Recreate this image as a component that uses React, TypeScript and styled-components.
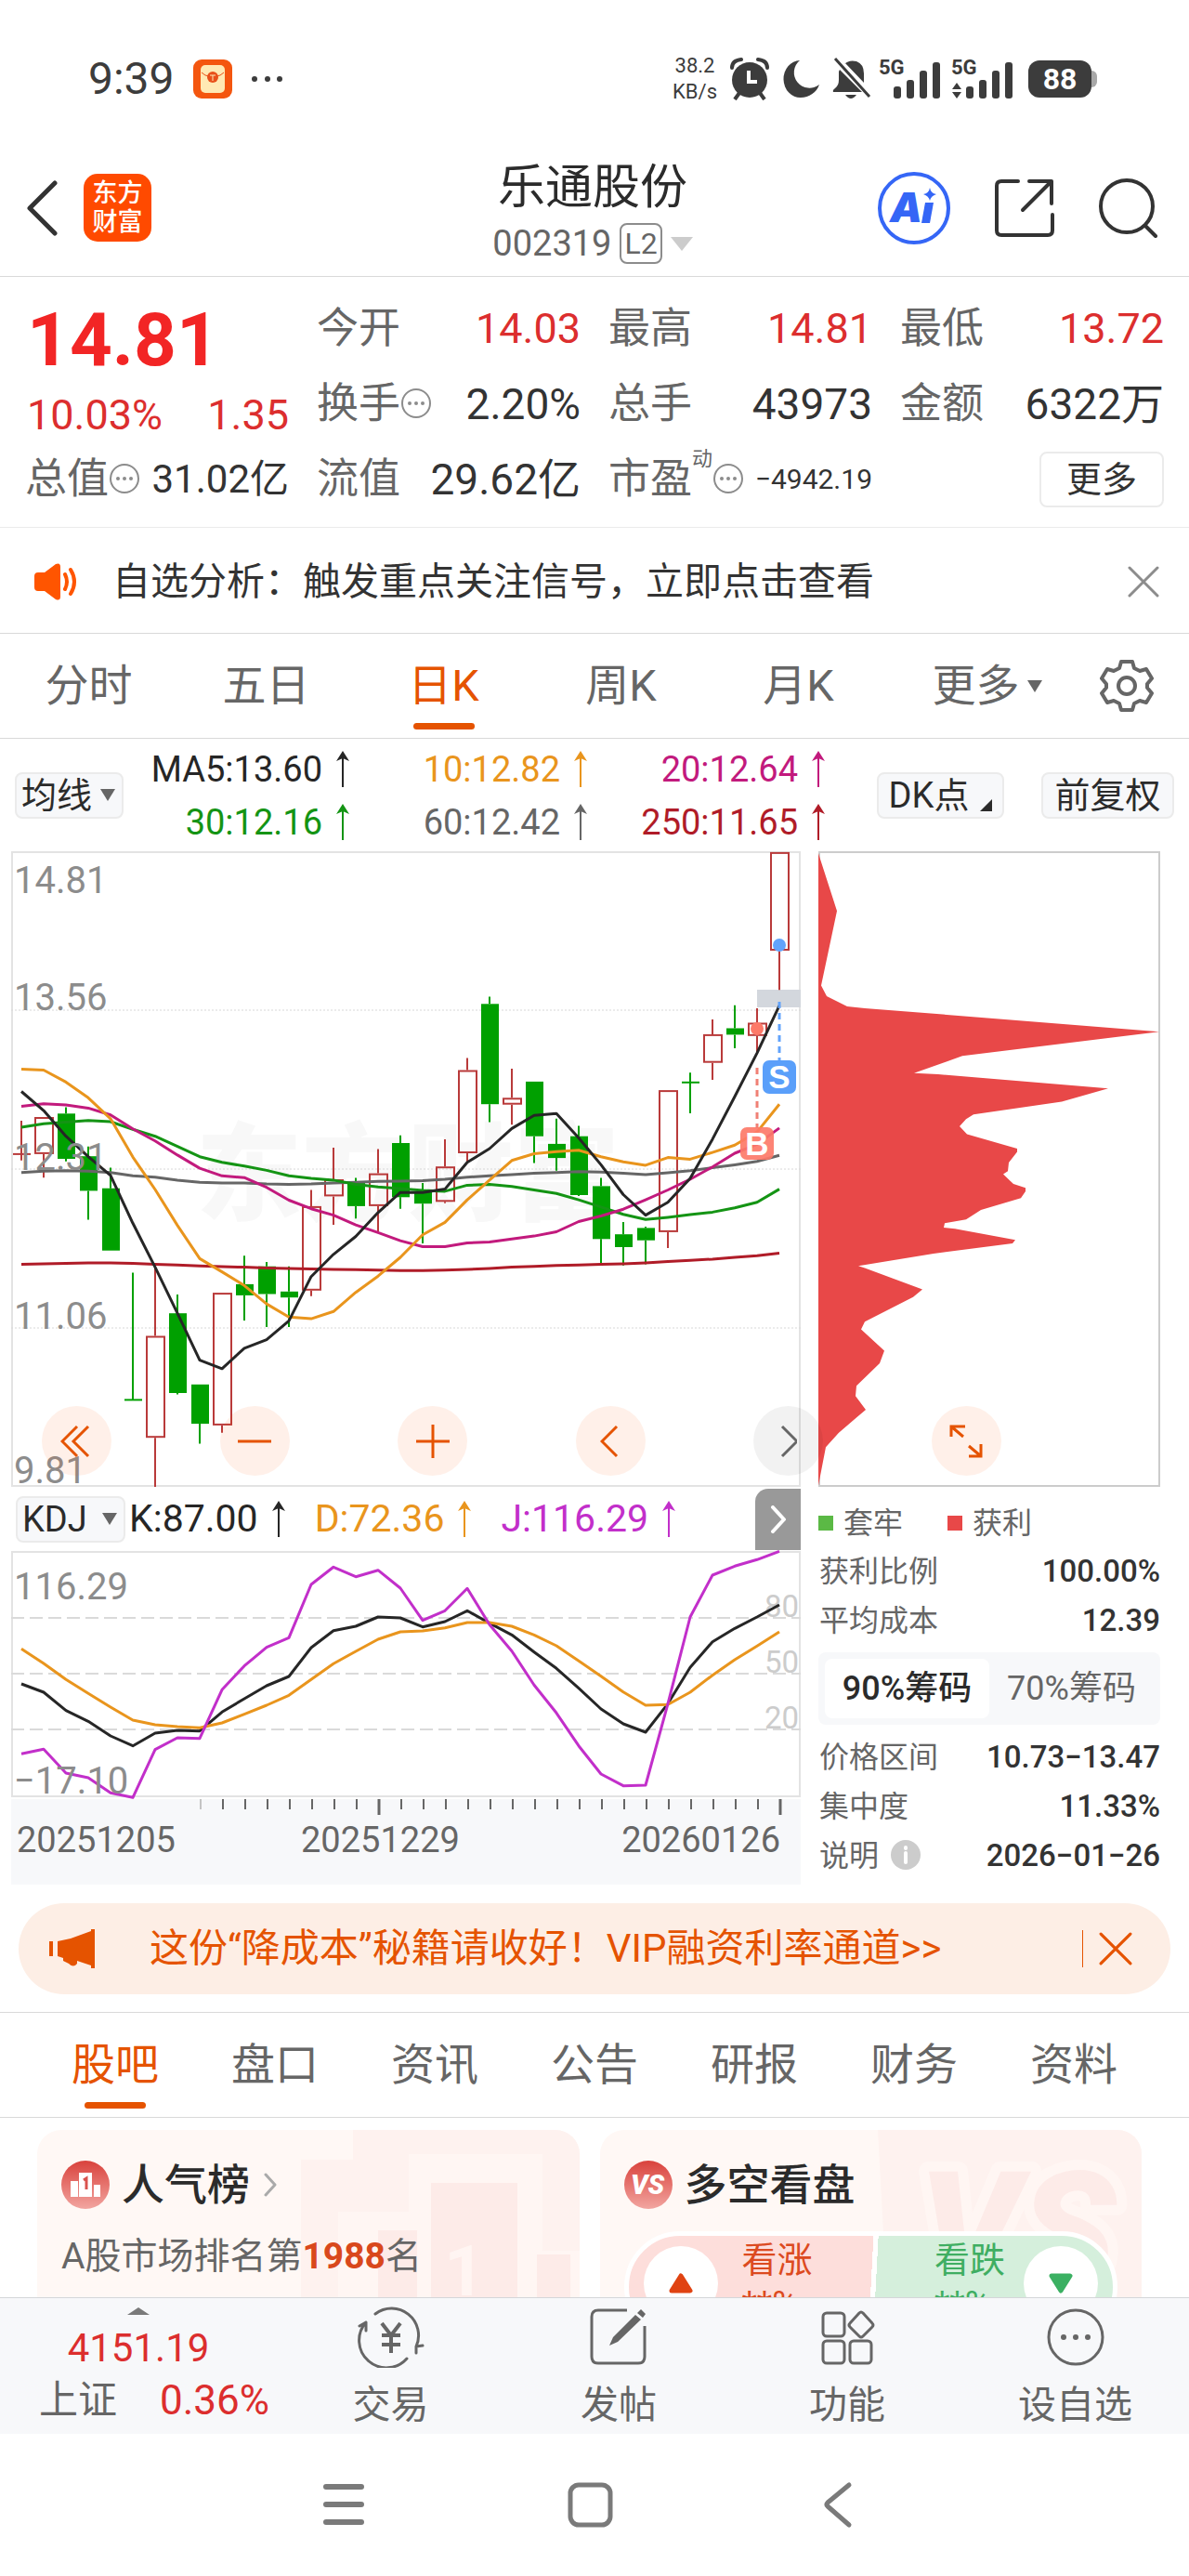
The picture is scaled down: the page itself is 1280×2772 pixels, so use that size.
import React from "react";
import styled, { createGlobalStyle, css } from "styled-components";

const color = {
  ink: "#2b2b2b",
  text: "#333333",
  sub: "#666666",
  faint: "#8c8c8c",
  red: "#dc2e2e",
  orange: "#e55300",
  line: "#d9d9d9",
  softLine: "#ebebeb",
  panel: "#f7f8fa",
  up: "#b93a3a",
  down: "#00a000",
};

const GlobalStyle = createGlobalStyle`
  *, *::before, *::after { box-sizing: border-box; }
  body {
    margin: 0;
    background: #fff;
    color: ${color.text};
    font-family: Roboto, "Noto Sans CJK SC", sans-serif;
  }
  button, select {
    margin: 0;
    padding: 0;
    border: 0;
    background: none;
    color: inherit;
    font: inherit;
  }
  svg { display: block; flex: none; }
  dl, dd, h1, h2, p { margin: 0; font-weight: 400; }
`;

const Shell = styled.div`
  display: flex;
  flex-direction: column;
  height: 100vh;
  background: #fff;
`;

/* ---------- status bar ---------- */

const StatusBar = styled.div`
  display: flex;
  justify-content: space-between;
  align-items: center;
  flex: none;
  height: 150px;
  padding: 20px 99px 0 95px;
  color: #3c3c3c;
`;

const StatusGroup = styled.div<{ $gap: number }>`
  display: flex;
  align-items: center;
  gap: ${(p) => p.$gap}px;
`;

const Clock = styled.time`
  font-size: 48px;
  line-height: 56px;
`;

const Speed = styled.span`
  font-size: 22px;
  line-height: 28px;
  text-align: center;
`;

const Battery = styled.span`
  display: flex;
  align-items: center;
  margin-left: 9px;
  &::after {
    content: "";
    width: 6px;
    height: 18px;
    border-radius: 0 6px 6px 0;
    background: #a8a8a8;
  }
`;

const BatteryLevel = styled.span`
  width: 68px;
  border-radius: 12px;
  background: #3c3c3c;
  color: #fff;
  font-size: 32px;
  font-weight: 700;
  line-height: 40px;
  text-align: center;
`;

/* ---------- header ---------- */

const Header = styled.header`
  display: grid;
  grid-template-columns: 1fr auto 1fr;
  align-items: center;
  flex: none;
  height: 148px;
  padding: 0 32px 0 28px;
  border-bottom: 1px solid ${color.line};
`;

const HeaderSide = styled.div<{ $end?: boolean }>`
  display: flex;
  align-items: center;
  gap: ${(p) => (p.$end ? 46 : 26)}px;
  justify-content: ${(p) => (p.$end ? "flex-end" : "flex-start")};
`;

const IconButton = styled.button`
  display: grid;
  place-items: center;
  flex: none;
`;

const BrandLogo = styled.a`
  display: grid;
  place-content: center;
  width: 73px;
  height: 73px;
  border-radius: 15px;
  background: #ff4a00;
  color: #fff;
  font-size: 27px;
  font-weight: 500;
  line-height: 31px;
  text-align: center;
  text-decoration: none;
`;

const TitleBlock = styled.div`
  padding-top: 9px;
  text-align: center;
`;

const StockName = styled.h1`
  color: ${color.ink};
  font-size: 51px;
  line-height: 60px;
`;

const StockCode = styled.button`
  display: flex;
  align-items: center;
  justify-content: center;
  gap: 9px;
  margin: 8px auto 0;
  color: ${color.sub};
  font-size: 38px;
  line-height: 44px;
`;

const LevelTag = styled.span`
  padding: 0 3px;
  border: 2px solid #8c8c8c;
  border-radius: 8px;
  font-size: 32px;
  line-height: 40px;
`;

/* ---------- quote ---------- */

const Main = styled.main`
  display: flex;
  flex-direction: column;
  flex: 1;
  min-height: 0;
  overflow-y: auto;
  scrollbar-width: none;
  > * { flex: none; }
`;

const Quote = styled.dl`
  display: grid;
  grid-template-columns: repeat(4, 1fr);
  grid-auto-rows: 81px;
  column-gap: 30px;
  padding: 15px 27px 11px;
  border-bottom: 1px solid ${color.softLine};
`;

const PriceCell = styled.div`
  grid-row: span 2;
  display: flex;
  flex-direction: column;
  padding-left: 2px;
  color: ${color.red};
`;

const Price = styled.strong`
  color: #f22525;
  font-size: 80px;
  font-weight: 700;
  line-height: 106px;
`;

const Change = styled.div`
  display: flex;
  justify-content: space-between;
  font-size: 45px;
  line-height: 56px;
`;

const QuoteCell = styled.div`
  display: flex;
  align-items: center;
  justify-content: space-between;
`;

const QuoteLabel = styled.dt`
  display: flex;
  align-items: center;
  color: ${color.sub};
  font-size: 45px;
  line-height: 52px;
  white-space: nowrap;
`;

const Superscript = styled.sup`
  align-self: flex-start;
  margin-top: -8px;
  font-size: 22px;
  line-height: 24px;
`;

const valueSize = { normal: 46, red: 45, fitted: 42, small: 30 };

const QuoteValue = styled.dd<{ $kind?: keyof typeof valueSize }>`
  color: ${(p) => (p.$kind === "red" ? color.red : color.text)};
  font-size: ${(p) => valueSize[p.$kind ?? "normal"]}px;
  line-height: 52px;
  white-space: nowrap;
`;

const MoreCell = styled.div`
  display: flex;
  align-items: center;
  justify-content: flex-end;
`;

const MoreButton = styled.button`
  width: 134px;
  border: 2px solid ${color.softLine};
  border-radius: 8px;
  font-size: 38px;
  line-height: 56px;
`;

/* ---------- notice ---------- */

const Notice = styled.div`
  display: flex;
  align-items: center;
  height: 114px;
  padding: 2px 32px 0 36px;
  border-bottom: 1px solid ${color.line};
`;

const NoticeText = styled.p`
  flex: 1;
  margin-left: 35px;
  font-size: 41px;
  line-height: 56px;
`;

/* ---------- period tabs ---------- */

const PeriodTabs = styled.nav`
  display: grid;
  grid-template-columns: repeat(6, 191fr) 134fr;
  height: 113px;
  border-bottom: 1px solid ${color.line};
`;

const TabButton = styled.button<{ $active?: boolean; $menu?: boolean }>`
  position: relative;
  display: flex;
  align-items: center;
  justify-content: center;
  gap: 8px;
  color: ${(p) => (p.$active ? color.orange : color.sub)};
  font-size: 47px;
  line-height: 60px;
  ${(p) =>
    p.$menu &&
    css`
      padding-left: 24px;
    `}
  ${(p) =>
    p.$active &&
    css`
      &::after {
        content: "";
        position: absolute;
        left: calc(50% - 33px);
        bottom: 9px;
        width: 66px;
        height: 7px;
        border-radius: 4px;
        background: ${color.orange};
      }
    `}
`;

/* ---------- moving averages ---------- */

const AverageBar = styled.div`
  display: flex;
  align-items: center;
  height: 121px;
  padding: 0 16px;
`;

const chip = css`
  border: 2px solid ${color.softLine};
  border-radius: 8px;
  background: ${color.panel};
  color: ${color.ink};
  font-size: 38px;
  line-height: 46px;
`;

const SelectBox = styled.label<{ $width: number }>`
  position: relative;
  flex: none;
  width: ${(p) => p.$width}px;
  select {
    ${chip}
    width: 100%;
    height: 50px;
    padding-left: 5px;
    appearance: none;
  }
  svg {
    position: absolute;
    top: 18px;
    right: 9px;
    pointer-events: none;
  }
`;

const ChipButton = styled.button<{ $wide?: boolean }>`
  ${chip}
  display: flex;
  align-items: flex-end;
  justify-content: center;
  gap: 12px;
  flex: none;
  width: ${(p) => (p.$wide ? 143 : 137)}px;
  svg { margin-bottom: 6px; }
`;

const AverageGrid = styled.div`
  display: grid;
  grid-template-columns: 244fr 256fr 256fr;
  flex: 1;
  margin-right: 55px;
  padding-top: 2px;
`;

const Reading = styled.span<{ $color: string; $size?: number }>`
  display: flex;
  align-items: center;
  justify-content: flex-end;
  gap: 14px;
  color: ${(p) => p.$color};
  font-size: ${(p) => p.$size ?? 38}px;
  line-height: 57px;
`;

const ChipGroup = styled.div`
  display: flex;
  gap: 40px;
`;

/* ---------- charts ---------- */

const ChartArea = styled.section`
  position: relative;
  display: grid;
  grid-template-columns: 850fr 368fr;
  column-gap: 19px;
  padding: 0 31px 0 12px;
`;

const ChartColumn = styled.div`
  min-width: 0;
`;

const Plot = styled.svg`
  width: 100%;
  height: auto;
  overflow: visible;
`;

const ChartControls = styled.div`
  position: absolute;
  top: 597px;
  left: 45px;
  right: 202px;
  display: flex;
  justify-content: space-between;
`;

const RoundButton = styled.button<{ $muted?: boolean }>`
  display: grid;
  place-items: center;
  width: 75px;
  height: 75px;
  border-radius: 50%;
  background: ${(p) => (p.$muted ? "rgba(0,0,0,0.05)" : "rgba(255,90,10,0.09)")};
  color: ${(p) => (p.$muted ? color.sub : color.orange)};
`;

const IndicatorBar = styled.div`
  display: flex;
  align-items: center;
  height: 69px;
  padding-left: 5px;
`;

const IndicatorValues = styled.div`
  display: flex;
  flex: 1;
  gap: 31px;
  margin-left: 4px;
`;

const NextIndicator = styled.button`
  display: grid;
  place-items: center;
  width: 49px;
  height: 66px;
  border-radius: 14px 0 0 0;
  background: #999;
  color: #fff;
`;

const TimeAxis = styled.div`
  height: 92px;
  margin-top: 2px;
  background: ${color.panel};
`;

const Dates = styled.div`
  display: grid;
  grid-template-columns: 306fr 190fr 326fr;
  padding: 0 22px 0 6px;
  color: ${color.sub};
  font-size: 38px;
  line-height: 52px;
  span:last-child { text-align: right; }
`;

/* ---------- cost panel ---------- */

const Legend = styled.div`
  display: grid;
  grid-template-columns: 139px 1fr;
  height: 64px;
  padding-top: 13px;
  color: ${color.sub};
  font-size: 32px;
  line-height: 44px;
`;

const LegendItem = styled.span<{ $swatch: string }>`
  display: flex;
  align-items: center;
  gap: 11px;
  &::before {
    content: "";
    width: 16px;
    height: 16px;
    background: ${(p) => p.$swatch};
  }
`;

const CostList = styled.dl`
  padding-left: 1px;
`;

const CostRow = styled.div`
  display: flex;
  align-items: center;
  justify-content: space-between;
  height: 53px;
  dt {
    display: flex;
    align-items: center;
    gap: 12px;
    color: ${color.sub};
    font-size: 32px;
    line-height: 44px;
  }
  dd {
    font-size: 33px;
    font-weight: 500;
    line-height: 44px;
  }
`;

const Segments = styled.div`
  display: grid;
  grid-template-columns: 177fr 177fr;
  margin: 8px 0;
  padding: 7px;
  border-radius: 8px;
  background: ${color.panel};
`;

const Segment = styled.button<{ $active?: boolean }>`
  border-radius: 8px;
  background: ${(p) => (p.$active ? "#fff" : "transparent")};
  color: ${(p) => (p.$active ? color.ink : color.sub)};
  font-size: 36px;
  font-weight: ${(p) => (p.$active ? 500 : 400)};
  line-height: 64px;
`;

/* ---------- promotion ---------- */

const Promo = styled.div`
  display: flex;
  align-items: center;
  margin: 20px 20px 19px;
  padding: 0 41px 0 32px;
  border-radius: 49px;
  background: #fdeee5;
  color: ${color.orange};
`;

const PromoLink = styled.a`
  flex: 1;
  margin-left: 57px;
  color: inherit;
  font-size: 42px;
  line-height: 98px;
  text-decoration: none;
`;

const PromoClose = styled(IconButton)`
  height: 40px;
  padding-left: 17px;
  border-left: 1px solid ${color.orange};
`;

/* ---------- content tabs and cards ---------- */

const ContentTabs = styled.nav`
  display: grid;
  grid-template-columns: repeat(7, 1fr);
  height: 114px;
  padding: 0 38px;
  border-top: 1px solid ${color.line};
  border-bottom: 1px solid ${color.line};
`;

const Cards = styled.div`
  display: grid;
  grid-template-columns: 1fr 1fr;
  gap: 22px;
  padding: 13px 51px 0 40px;
`;

const Card = styled.article`
  position: relative;
  height: 260px;
  padding: 26px 26px 0;
  border-radius: 26px;
  overflow: hidden;
  background: #fff8f5;
`;

const CardArt = styled.svg`
  position: absolute;
  top: 0;
  right: 0;
`;

const CardHead = styled.h2`
  position: relative;
  display: flex;
  align-items: center;
  gap: 13px;
  color: ${color.ink};
  font-size: 46px;
  font-weight: 500;
  line-height: 66px;
`;

const Rank = styled.p`
  position: relative;
  margin-top: 16px;
  color: ${color.sub};
  font-size: 39px;
  line-height: 56px;
  strong {
    color: #d9481c;
    font-weight: 700;
  }
`;

const Vote = styled.div`
  position: relative;
  display: grid;
  grid-template-columns: 1fr 1fr;
  margin: 17px 0 0;
  border: 5px solid #fff;
  border-radius: 60px;
  overflow: hidden;
  background: linear-gradient(93deg, #fddedb 50%, #fff 50%, #fff 51%, #d5efdc 51%);
`;

const VoteSide = styled.button<{ $tone: string; $flip?: boolean }>`
  display: flex;
  flex-direction: ${(p) => (p.$flip ? "row-reverse" : "row")};
  align-items: flex-start;
  gap: ${(p) => (p.$flip ? 20 : 26)}px;
  height: 110px;
  padding: 11px 16px 0;
  color: ${(p) => p.$tone};
`;

const VoteText = styled.span`
  display: grid;
  margin-top: -9px;
  font-size: 38px;
  line-height: 48px;
  text-align: left;
`;

const VoteKnob = styled.i`
  display: grid;
  place-items: center;
  flex: none;
  width: 80px;
  height: 80px;
  border-radius: 50%;
  background: #fff;
`;

/* ---------- bottom bars ---------- */

const BottomBar = styled.footer`
  display: grid;
  grid-template-columns: 298fr 245fr 246fr 246fr 245fr;
  flex: none;
  height: 147px;
  border-top: 1px solid #d4d6d9;
  background: ${color.panel};
`;

const IndexButton = styled.button`
  display: flex;
  flex-direction: column;
  align-items: center;
  padding-top: 10px;
  color: ${color.red};
  font-size: 42px;
  line-height: 56px;
`;

const IndexPrice = styled.span`
  margin-top: 8px;
`;

const IndexRow = styled.span`
  display: flex;
  justify-content: center;
  gap: 46px;
  padding-left: 34px;
  font-size: 44px;
  b {
    color: ${color.sub};
    font-size: 42px;
    font-weight: 400;
  }
`;

const BottomItem = styled.button`
  display: flex;
  flex-direction: column;
  align-items: center;
  gap: 9px;
  padding-top: 9px;
  color: ${color.sub};
  font-size: 41px;
  line-height: 62px;
`;

const SystemBar = styled.div`
  display: flex;
  justify-content: center;
  gap: 199px;
  flex: none;
  height: 153px;
  padding-right: 8px;
  color: #7a7a7a;
`;

/* ---------- shared drawings ---------- */

const stroke = {
  fill: "none",
  stroke: "currentColor",
  strokeLinecap: "round" as const,
  strokeLinejoin: "round" as const,
};

const Triangle = ({ w, h, fill = "currentColor", up }: { w: number; h: number; fill?: string; up?: boolean }) => (
  <svg width={w} height={h} viewBox="0 0 10 10" preserveAspectRatio="none" aria-hidden="true">
    <path d={up ? "M0 10L5 0L10 10Z" : "M0 0H10L5 10Z"} fill={fill} />
  </svg>
);

const RiseArrow = () => (
  <svg width="16" height="40" viewBox="0 0 16 40" aria-label="上升">
    <path d="M8 4V39" stroke="currentColor" strokeWidth="2" />
    <path d="M8 0L15 11L8 8L1 11Z" fill="currentColor" />
  </svg>
);

const MoreDots = () => (
  <svg width="34" height="34" viewBox="0 0 34 34" aria-hidden="true">
    <circle cx="17" cy="16" r="15" fill="none" stroke="#8c8c8c" strokeWidth="2" />
    {[10, 17, 24].map((x) => (
      <circle key={x} cx={x} cy="16" r="2" fill="#8c8c8c" />
    ))}
  </svg>
);

const Cross = ({ size, width, tone }: { size: number; width: number; tone: string }) => (
  <svg width={size} height={size} viewBox="0 0 34 34" aria-hidden="true" color={tone}>
    <path d="M2 2L32 32M32 2L2 32" {...stroke} strokeWidth={width} />
  </svg>
);

const Signal = ({ data }: { data?: boolean }) => (
  <svg width="66" height="46" viewBox="0 0 66 46" fill="#3c3c3c" aria-hidden="true">
    <text x="0" y="18" fontSize="22" fontWeight="700" fontFamily="Roboto, sans-serif">5G</text>
    {data && <path d="M6 27L11 34H1ZM6 44L11 37H1Z" />}
    <rect x="16" y="31" width="8" height="13" rx="3" />
    <rect x="30" y="24" width="8" height="20" rx="3" />
    <rect x="44" y="14" width="8" height="30" rx="3" />
    <rect x="58" y="5" width="8" height="39" rx="3" />
  </svg>
);

/* ---------- price chart ---------- */

/* Samples are stored on the plot's own level scale: 35 at the top edge, 1525 at the bottom edge. */
const STEP = 24;
const FIRST = 11;
const xAt = (i: number) => FIRST + i * STEP;
const yAt = (level: number) => Math.round(((level - 35) * 6840) / 1490) / 10;
const kdjY = (level: number) => Math.round(((level - 207) * 10) / 3) / 10;

const trace = (levels: number[], y: (n: number) => number) =>
  levels.map((level, i) => `${xAt(i)},${y(level)}`).join(" ");

type Candle = [high: number, top: number, bottom: number, low: number, rising?: 1];

const candles: Candle[] = [
  [667, 745, 745, 760, 1], [658, 658, 745, 800, 1], [635, 650, 756, 762], [727, 750, 831, 899],
  [777, 825, 971, 971], [1023, 1321, 1321, 1321], [1010, 1171, 1410, 1525, 1], [1074, 1118, 1305, 1308],
  [1285, 1285, 1377, 1424], [1070, 1070, 1381, 1398, 1], [983, 1050, 1076, 1135], [998, 1008, 1073, 1150],
  [1008, 1067, 1081, 1150], [829, 867, 1065, 1078, 1], [730, 804, 844, 911, 1], [801, 812, 867, 896],
  [733, 790, 867, 926, 1], [701, 719, 846, 873], [813, 833, 861, 954], [710, 774, 857, 860, 1],
  [520, 548, 743, 765, 1], [376, 393, 628, 670], [545, 613, 629, 676, 1], [575, 575, 703, 766],
  [662, 721, 754, 784], [679, 703, 841, 843], [801, 820, 944, 1000], [904, 933, 963, 1006],
  [915, 918, 947, 1003], [595, 595, 928, 965, 1], [554, 577, 577, 649], [429, 464, 531, 571, 1],
  [396, 450, 465, 497], [403, 437, 468, 510, 1], [37, 37, 268, 360, 1],
];

const averages: { stroke: string; levels: number[] }[] = [
  { stroke: "#b01c28", levels: [1003, 1002, 1001, 1000, 1000, 1001, 1003, 1005, 1007, 1009, 1010, 1012, 1013, 1014, 1015, 1016, 1017, 1018, 1018, 1017, 1015, 1013, 1010, 1008, 1006, 1005, 1003, 1002, 1000, 997, 994, 991, 987, 983, 977] },
  { stroke: "#666666", levels: [788, 785, 784, 785, 788, 796, 799, 806, 811, 813, 813, 815, 816, 815, 813, 811, 809, 808, 807, 804, 799, 796, 793, 790, 788, 786, 787, 790, 793, 789, 784, 777, 770, 762, 748] },
  { stroke: "#149414", levels: [682, 674, 670, 666, 669, 687, 703, 727, 751, 764, 773, 783, 796, 802, 806, 816, 822, 826, 830, 832, 818, 816, 821, 829, 837, 852, 869, 886, 898, 893, 887, 881, 871, 858, 827] },
  { stroke: "#c21a7d", levels: [633, 627, 630, 637, 653, 686, 714, 747, 778, 796, 800, 823, 853, 873, 888, 911, 929, 948, 962, 962, 953, 951, 944, 937, 927, 903, 890, 874, 852, 829, 804, 775, 743, 722, 684] },
  { stroke: "#e9951d", levels: [546, 548, 576, 613, 662, 752, 828, 912, 990, 1021, 1053, 1096, 1127, 1131, 1114, 1069, 1031, 987, 934, 905, 852, 806, 760, 744, 739, 736, 751, 763, 771, 753, 757, 741, 724, 693, 628] },
  { stroke: "#262626", levels: [598, 643, 703, 751, 795, 907, 1010, 1118, 1228, 1248, 1200, 1180, 1136, 1032, 980, 938, 882, 835, 835, 827, 764, 732, 685, 654, 650, 707, 770, 840, 888, 858, 802, 710, 610, 508, 397] },
];

const priceMarks = [
  { label: "14.81", y: 45 },
  { label: "13.56", y: 171 },
  { label: "12.31", y: 343 },
  { label: "11.06", y: 514 },
  { label: "9.81", y: 680 },
];

const CandleShape = ({ i, candle }: { i: number; candle: Candle }) => {
  const [high, top, bottom, low, rising] = candle;
  const x = xAt(i);
  const tone = rising ? color.up : color.down;
  const body = yAt(bottom) - yAt(top);
  return (
    <g stroke={tone} strokeWidth="2">
      <path d={`M${x} ${yAt(high)}V${yAt(top)}M${x} ${yAt(bottom)}V${yAt(low)}`} />
      {body < 1 ? (
        <path d={`M${x - 9} ${yAt(top)}H${x + 10}`} />
      ) : rising ? (
        <rect x={x - 9} y={yAt(top) + 1} width="19" height={Math.max(body - 2, 2)} fill="none" />
      ) : (
        <rect x={x - 9} y={yAt(top)} width="19" height={body} fill={tone} stroke="none" />
      )}
    </g>
  );
};

const PriceChart = () => (
  <Plot viewBox="0 0 850 684" role="img" aria-label="日K线图">
    <text x="199" y="388" fontSize="114" fontWeight="900" fill="#f8f8f8" fontFamily="'Noto Sans CJK SC', sans-serif">东方财富</text>
    <rect x="1" y="1" width="848" height="682" fill="none" stroke="#e3e3e3" strokeWidth="2" />
    {[171, 342, 513].map((y) => (
      <path key={y} d={`M0 ${y}H850`} stroke="#d8d8d8" strokeDasharray="2 2" />
    ))}
    <rect x="803" y="149" width="47" height="19" fill="#d3d7dd" />
    {candles.map((candle, i) => (
      <CandleShape key={i} i={i} candle={candle} />
    ))}
    {averages.map((line) => (
      <polyline key={line.stroke} points={trace(line.levels, yAt)} fill="none" stroke={line.stroke} strokeWidth="3" strokeLinejoin="round" />
    ))}
    <g fill={color.faint} fontSize="40" fontFamily="Roboto, sans-serif">
      {priceMarks.map((mark) => (
        <text key={mark.label} x="3" y={mark.y}>{mark.label}</text>
      ))}
    </g>
    <circle cx="827" cy="101" r="7" fill="#62a3fb" />
    <circle cx="803" cy="191" r="7" fill="#fd7a69" />
    <path d="M827 162V226" stroke="#62a3fb" strokeWidth="3" strokeDasharray="7 5" />
    <path d="M803 233V298" stroke="#f08075" strokeWidth="3" strokeDasharray="7 5" />
    <rect x="809" y="225" width="36" height="36" rx="7" fill="#5a9ffa" />
    <rect x="785" y="297" width="36" height="35" rx="7" fill="#fd7a69" fillOpacity="0.92" />
    <g fill="#fff" fontSize="35" fontWeight="700" fontFamily="'Liberation Sans', sans-serif" textAnchor="middle">
      <text x="827" y="255">S</text>
      <text x="803" y="327">B</text>
    </g>
  </Plot>
);

/* ---------- KDJ chart ---------- */

const kdj = [
  { stroke: "#262626", levels: [636, 663, 722, 757, 804, 836, 795, 786, 788, 727, 684, 642, 612, 519, 464, 450, 420, 423, 452, 435, 400, 440, 478, 533, 586, 650, 717, 765, 792, 700, 583, 500, 457, 420, 381] },
  { stroke: "#e9951d", levels: [523, 570, 622, 667, 711, 753, 768, 774, 778, 762, 734, 705, 673, 622, 571, 531, 492, 468, 465, 455, 438, 438, 450, 478, 513, 562, 611, 662, 705, 703, 663, 608, 558, 514, 468] },
  { stroke: "#c22fca", levels: [862, 847, 924, 939, 988, 1003, 848, 810, 812, 655, 578, 518, 487, 315, 259, 290, 269, 327, 431, 400, 328, 445, 530, 640, 730, 836, 927, 965, 963, 700, 420, 285, 256, 235, 208] },
];

const KdjChart = () => (
  <Plot viewBox="0 0 850 265" role="img" aria-label="KDJ指标图">
    <rect x="1" y="1" width="848" height="263" fill="none" stroke="#e3e3e3" strokeWidth="2" />
    {[72, 132, 192].map((y) => (
      <path key={y} d={`M0 ${y}H850`} stroke="#dadada" strokeWidth="2" strokeDasharray="14 6" />
    ))}
    <g fill="#cccccc" fontSize="33" fontFamily="Roboto, sans-serif" textAnchor="end">
      <text x="848" y="71">80</text>
      <text x="848" y="131">50</text>
      <text x="848" y="191">20</text>
    </g>
    {kdj.map((line) => (
      <polyline key={line.stroke} points={trace(line.levels, kdjY)} fill="none" stroke={line.stroke} strokeWidth="3" strokeLinejoin="round" />
    ))}
    <g fill={color.faint} fontSize="40" fontFamily="Roboto, sans-serif">
      <text x="3" y="52">116.29</text>
      <text x="3" y="261">−17.10</text>
    </g>
  </Plot>
);

const AxisTicks = () => (
  <Plot viewBox="0 0 850 18" aria-hidden="true">
    {Array.from({ length: 27 }, (_, n) => n + 8).map((i) => {
      const major = i === 16 || i === 34;
      return (
        <path key={i} d={`M${xAt(i) + 1} 0V${major ? 17 : 11}`} stroke={i === 8 ? "#c4c4c4" : "#666"} strokeWidth={major ? 3 : 2} />
      );
    })}
  </Plot>
);

/* ---------- cost distribution ---------- */

const spread: [number, number][] = [
  [0, 35], [0, 40], [60, 175], [8, 350], [26, 375], [94, 399], [151, 403], [1101, 458], [466, 515], [308, 555],
  [388, 558], [936, 591], [786, 622], [500, 652], [476, 663], [456, 680], [481, 698], [643, 732], [643, 740],
  [616, 765], [611, 785], [596, 792], [631, 815], [669, 824], [669, 832], [654, 848], [526, 876], [476, 898],
  [409, 907], [404, 917], [441, 920], [636, 946], [626, 954], [371, 978], [128, 1007], [151, 1012], [337, 1062],
  [306, 1080], [151, 1138], [138, 1156], [212, 1206], [198, 1235], [124, 1288], [119, 1312], [152, 1344],
  [66, 1398], [24, 1432], [0, 1522],
];

const CostChart = () => (
  <Plot viewBox="0 0 368 684" role="img" aria-label="筹码分布图">
    <rect x="1" y="1" width="366" height="682" fill="none" stroke="#cccccc" strokeWidth="2" />
    <polygon points={spread.map(([w, level]) => `${Math.round(w / 3)},${yAt(level)}`).join(" ")} fill="#e84848" />
  </Plot>
);

/* ---------- page ---------- */

const contentTabs = ["股吧", "盘口", "资讯", "公告", "研报", "财务", "资料"];
const periods = ["分时", "五日", "日K", "周K", "月K"];

const readings = [
  { text: "MA5:13.60", color: "#262626" },
  { text: "10:12.82", color: "#e9951d" },
  { text: "20:12.64", color: "#c21a7d" },
  { text: "30:12.16", color: "#149414" },
  { text: "60:12.42", color: "#666666" },
  { text: "250:11.65", color: "#b01c28" },
];

export default function App() {
  return (
    <Shell>
      <GlobalStyle />

      <StatusBar>
        <StatusGroup $gap={20}>
          <Clock>9:39</Clock>
          <svg width="42" height="42" viewBox="0 0 42 42" aria-hidden="true">
            <rect width="42" height="42" rx="9" fill="#f4560f" />
            <rect x="8" y="6" width="26" height="30" rx="5" fill="#ffe9b4" />
            <path d="M9 14Q13 18 17 18M33 14Q29 18 25 18" fill="none" stroke="#e8501a" strokeWidth="1" />
            <circle cx="21" cy="19" r="6" fill="#e8501a" />
            <path d="M18 17H24M21 17V23" stroke="#ffe9b4" strokeWidth="1" />
          </svg>
          <svg width="36" height="8" viewBox="0 0 36 8" fill="#3c3c3c" aria-hidden="true">
            <circle cx="4" cy="4" r="3" />
            <circle cx="18" cy="4" r="3" />
            <circle cx="31" cy="4" r="3" />
          </svg>
        </StatusGroup>
        <StatusGroup $gap={8}>
          <StatusGroup $gap={14}>
            <Speed>38.2<br />KB/s</Speed>
            <svg width="42" height="46" viewBox="0 0 42 46" aria-hidden="true">
              <path d="M10 38L5 45M32 38L37 45" stroke="#3c3c3c" strokeWidth="4" />
              <path d="M2 11Q2 3 12 2M40 11Q40 3 30 2" fill="none" stroke="#3c3c3c" strokeWidth="4" strokeLinecap="round" />
              <circle cx="21" cy="24" r="19" fill="#3c3c3c" />
              <path d="M20 14V26H29" fill="none" stroke="#fff" strokeWidth="4" />
            </svg>
            <svg width="40" height="42" viewBox="0 0 40 42" aria-hidden="true">
              <path d="M19 1A18 20 0 0 0 20 41A21 20 0 0 0 40 27A15 15 0 0 1 19 1Z" fill="#3c3c3c" />
            </svg>
            <svg width="42" height="46" viewBox="0 0 42 46" fill="#3c3c3c" aria-hidden="true">
              <path d="M13 7Q18 2 26 4Q34 7 34 17V27L14 6ZM8 13L32 37H1Q0 35 3 33Q7 30 7 24V15Z" />
              <path d="M14 40H26Q20 48 14 40Z" />
              <path d="M3 1L40 42" stroke="#3c3c3c" strokeWidth="3" />
            </svg>
          </StatusGroup>
          <StatusGroup $gap={12}>
            <Signal />
            <Signal data />
          </StatusGroup>
          <Battery><BatteryLevel>88</BatteryLevel></Battery>
        </StatusGroup>
      </StatusBar>

      <Header>
        <HeaderSide>
          <IconButton aria-label="返回">
            <svg width="36" height="60" viewBox="0 0 36 60" color="#333">
              <path d="M31 3L4 30L31 57" {...stroke} strokeWidth="5" />
            </svg>
          </IconButton>
          <BrandLogo href="#home">东方<br />财富</BrandLogo>
        </HeaderSide>
        <TitleBlock>
          <StockName>乐通股份</StockName>
          <StockCode>
            002319<LevelTag>L2</LevelTag>
            <Triangle w={24} h={15} fill="#cccccc" />
          </StockCode>
        </TitleBlock>
        <HeaderSide $end>
          <IconButton aria-label="Ai">
            <svg width="80" height="80" viewBox="0 0 80 80" fill="#3566f6">
              <circle cx="40" cy="40" r="37" fill="none" stroke="#3566f6" strokeWidth="4" />
              <text x="14" y="55" fontSize="44" fontWeight="900" fontStyle="italic" fontFamily="Inter, Roboto, sans-serif">A</text>
              <path d="M52 34H61L57 56H48Z" />
              <path d="M57 18Q58 24 64 25Q58 27 57 32Q56 27 50 25Q56 24 57 18Z" />
            </svg>
          </IconButton>
          <IconButton aria-label="分享">
            <svg width="66" height="66" viewBox="0 0 66 66" color="#333">
              <path d="M26 4H8Q3 4 3 9V57Q3 62 8 62H58Q63 62 63 57V40" {...stroke} strokeWidth="4" />
              <path d="M38 4H62V28M62 4L31 35" {...stroke} strokeWidth="4" />
            </svg>
          </IconButton>
          <IconButton aria-label="搜索">
            <svg width="66" height="66" viewBox="0 0 66 66" color="#333">
              <circle cx="31" cy="31" r="28" {...stroke} strokeWidth="4" />
              <path d="M51 52L62 63" {...stroke} strokeWidth="4" />
            </svg>
          </IconButton>
        </HeaderSide>
      </Header>

      <Main>
        <Quote>
          <PriceCell>
            <Price>14.81</Price>
            <Change><span>10.03%</span><span>1.35</span></Change>
          </PriceCell>
          <QuoteCell><QuoteLabel>今开</QuoteLabel><QuoteValue $kind="red">14.03</QuoteValue></QuoteCell>
          <QuoteCell><QuoteLabel>最高</QuoteLabel><QuoteValue $kind="red">14.81</QuoteValue></QuoteCell>
          <QuoteCell><QuoteLabel>最低</QuoteLabel><QuoteValue $kind="red">13.72</QuoteValue></QuoteCell>
          <QuoteCell><QuoteLabel>换手<MoreDots /></QuoteLabel><QuoteValue>2.20%</QuoteValue></QuoteCell>
          <QuoteCell><QuoteLabel>总手</QuoteLabel><QuoteValue>43973</QuoteValue></QuoteCell>
          <QuoteCell><QuoteLabel>金额</QuoteLabel><QuoteValue>6322万</QuoteValue></QuoteCell>
          <QuoteCell><QuoteLabel>总值<MoreDots /></QuoteLabel><QuoteValue $kind="fitted">31.02亿</QuoteValue></QuoteCell>
          <QuoteCell><QuoteLabel>流值</QuoteLabel><QuoteValue>29.62亿</QuoteValue></QuoteCell>
          <QuoteCell>
            <QuoteLabel>市盈<Superscript>动</Superscript><MoreDots /></QuoteLabel>
            <QuoteValue $kind="small">−4942.19</QuoteValue>
          </QuoteCell>
          <MoreCell><MoreButton>更多</MoreButton></MoreCell>
        </Quote>

        <Notice>
          <svg width="50" height="44" viewBox="0 0 50 44" aria-hidden="true">
            <path d="M5 12H12L24 3Q29 1 29 6V38Q29 43 24 41L12 32H5Q1 32 1 28V16Q1 12 5 12Z" fill="#ff5500" />
            <path d="M34 14Q38 22 34 30M40 9Q48 22 40 35" fill="none" stroke="#ff5500" strokeWidth="4" strokeLinecap="round" />
          </svg>
          <NoticeText>自选分析：触发重点关注信号，立即点击查看</NoticeText>
          <IconButton aria-label="关闭提示"><Cross size={34} width={3} tone={color.faint} /></IconButton>
        </Notice>

        <PeriodTabs>
          {periods.map((name) => (
            <TabButton key={name} $active={name === "日K"}>{name}</TabButton>
          ))}
          <TabButton $menu>更多<Triangle w={16} h={13} /></TabButton>
          <TabButton aria-label="设置">
            <svg width="58" height="58" viewBox="0 0 58 58">
              <path d="M23 3H35L37 10L43 13L50 11L56 21L51 27V31L56 37L50 47L43 45L37 48L35 55H23L21 48L15 45L8 47L2 37L7 31V27L2 21L8 11L15 13L21 10Z" {...stroke} strokeWidth="4" />
              <circle cx="29" cy="29" r="9" {...stroke} strokeWidth="4" />
            </svg>
          </TabButton>
        </PeriodTabs>

        <AverageBar>
          <SelectBox $width={117}>
            <select aria-label="均线"><option>均线</option></select>
            <Triangle w={16} h={13} fill={color.sub} />
          </SelectBox>
          <AverageGrid>
            {readings.map((r) => (
              <Reading key={r.text} $color={r.color}>{r.text}<RiseArrow /></Reading>
            ))}
          </AverageGrid>
          <ChipGroup>
            <ChipButton>
              DK点
              <svg width="13" height="13" viewBox="0 0 13 13" aria-hidden="true"><path d="M13 0V13H0Z" fill={color.ink} /></svg>
            </ChipButton>
            <ChipButton $wide>前复权</ChipButton>
          </ChipGroup>
        </AverageBar>

        <ChartArea>
          <ChartColumn>
            <PriceChart />
            <IndicatorBar>
              <SelectBox $width={118}>
                <select aria-label="指标"><option>KDJ</option></select>
                <Triangle w={16} h={13} fill={color.sub} />
              </SelectBox>
              <IndicatorValues>
                <Reading $color="#262626" $size={41}>K:87.00<RiseArrow /></Reading>
                <Reading $color="#e9951d" $size={41}>D:72.36<RiseArrow /></Reading>
                <Reading $color="#c22fca" $size={41}>J:116.29<RiseArrow /></Reading>
              </IndicatorValues>
              <NextIndicator aria-label="下一指标">
                <svg width="18" height="30" viewBox="0 0 18 30"><path d="M3 2L15 15L3 28" {...stroke} strokeWidth="4" /></svg>
              </NextIndicator>
            </IndicatorBar>
            <KdjChart />
            <TimeAxis>
              <AxisTicks />
              <Dates><span>20251205</span><span>20251229</span><span>20260126</span></Dates>
            </TimeAxis>
          </ChartColumn>

          <ChartColumn>
            <CostChart />
            <Legend>
              <LegendItem $swatch="#5bb945">套牢</LegendItem>
              <LegendItem $swatch="#e84848">获利</LegendItem>
            </Legend>
            <CostList>
              <CostRow><dt>获利比例</dt><dd>100.00%</dd></CostRow>
              <CostRow><dt>平均成本</dt><dd>12.39</dd></CostRow>
            </CostList>
            <Segments>
              <Segment $active aria-pressed="true">90%筹码</Segment>
              <Segment aria-pressed="false">70%筹码</Segment>
            </Segments>
            <CostList>
              <CostRow><dt>价格区间</dt><dd>10.73−13.47</dd></CostRow>
              <CostRow><dt>集中度</dt><dd>11.33%</dd></CostRow>
              <CostRow>
                <dt>
                  说明
                  <svg width="34" height="34" viewBox="0 0 34 34" aria-hidden="true">
                    <circle cx="17" cy="16" r="16" fill="#cccccc" />
                    <path d="M17 14V24M17 8V9" stroke="#fff" strokeWidth="4" strokeLinecap="round" />
                  </svg>
                </dt>
                <dd>2026−01−26</dd>
              </CostRow>
            </CostList>
          </ChartColumn>

          <ChartControls>
            <RoundButton aria-label="最早">
              <svg width="36" height="36" viewBox="0 0 36 36"><path d="M18 2L2 18L18 34M30 2L14 18L30 34" {...stroke} strokeLinecap="butt" strokeLinejoin="miter" strokeWidth="3" /></svg>
            </RoundButton>
            <RoundButton aria-label="缩小">
              <svg width="36" height="36" viewBox="0 0 36 36"><path d="M0 18H36" {...stroke} strokeWidth="3" /></svg>
            </RoundButton>
            <RoundButton aria-label="放大">
              <svg width="36" height="36" viewBox="0 0 36 36"><path d="M0 18H36M18 0V36" {...stroke} strokeWidth="3" /></svg>
            </RoundButton>
            <RoundButton aria-label="向前">
              <svg width="22" height="36" viewBox="0 0 22 36"><path d="M18 2L2 18L18 34" {...stroke} strokeLinecap="butt" strokeLinejoin="miter" strokeWidth="3" /></svg>
            </RoundButton>
            <RoundButton $muted aria-label="向后">
              <svg width="18" height="36" viewBox="0 0 18 36"><path d="M2 2L18 18L2 34" {...stroke} strokeLinecap="butt" strokeLinejoin="miter" strokeWidth="3" /></svg>
            </RoundButton>
            <RoundButton aria-label="展开">
              <svg width="38" height="38" viewBox="0 0 38 38"><path d="M18 3H3V14M3 3L16 14M22 35H35V22M35 35L22 24" {...stroke} strokeLinecap="butt" strokeLinejoin="miter" strokeWidth="3" /></svg>
            </RoundButton>
          </ChartControls>
        </ChartArea>

        <Promo>
          <svg width="52" height="42" viewBox="0 0 52 42" fill={color.orange} aria-hidden="true">
            <rect x="1" y="13" width="4" height="16" />
            <path d="M10 13L24 10L46 2V0H50V42H46V39L31 34V37Q27 42 22 37L16 34V31L10 29Z" />
          </svg>
          <PromoLink href="#vip">这份“降成本”秘籍请收好！VIP融资利率通道&gt;&gt;</PromoLink>
          <PromoClose aria-label="关闭"><Cross size={36} width={3} tone={color.orange} /></PromoClose>
        </Promo>

        <ContentTabs>
          {contentTabs.map((name) => (
            <TabButton key={name} $active={name === "股吧"}>{name}</TabButton>
          ))}
        </ContentTabs>

        <Cards>
          <Card>
            <CardArt width="300" height="260" viewBox="0 0 300 260" aria-hidden="true">
              <path d="M56 0H300V260H0V32H56Z" fill="#fef2ef" />
              <path d="M116 26H260V130H300V260H40V88H116Z" fill="#fff6f3" />
              <path d="M144 57H233V260H140V57ZM83 108H125V260H83ZM254 134H290V260H254Z" fill="#fdebe8" />
              <text x="154" y="178" fontSize="76" fontWeight="700" fill="#fff5f2" fontFamily="Roboto, sans-serif">1</text>
            </CardArt>
            <CardHead>
              <svg width="52" height="52" viewBox="0 0 52 52" aria-hidden="true">
                <defs>
                  <linearGradient id="badge" x1="0" y1="0" x2="0" y2="1">
                    <stop offset="0" stopColor="#d9423c" />
                    <stop offset="1" stopColor="#f2a5a0" />
                  </linearGradient>
                </defs>
                <circle cx="26" cy="26" r="26" fill="url(#badge)" />
                <path d="M10 22H18V39H10ZM19 13H33V39H19ZM35 26H42V39H35Z" fill="#fff" />
                <path d="M24 21L27 19V31" fill="none" stroke="#d9534e" strokeWidth="3" />
              </svg>
              人气榜
              <svg width="16" height="26" viewBox="0 0 16 26" color="#aaaaaa"><path d="M4 2L14 13L4 24" {...stroke} strokeWidth="3" /></svg>
            </CardHead>
            <Rank>A股市场排名第<strong>1988</strong>名</Rank>
          </Card>
          <Card>
            <CardArt width="290" height="260" viewBox="0 0 290 260" aria-hidden="true">
              <path d="M6 0H290V260H20Z" fill="#fef2ef" />
              <text x="50" y="166" fontSize="170" fontWeight="900" fontStyle="italic" fill="#fdebe8" stroke="#fff6f3" strokeWidth="22" strokeLinejoin="round" paintOrder="stroke" fontFamily="Roboto, sans-serif">VS</text>
            </CardArt>
            <CardHead>
              <svg width="52" height="52" viewBox="0 0 52 52" aria-hidden="true">
                <circle cx="26" cy="26" r="26" fill="url(#badge)" />
                <text x="25" y="36" fontSize="29" fontWeight="900" fontStyle="italic" fill="#fff" textAnchor="middle" fontFamily="Roboto, sans-serif">VS</text>
              </svg>
              多空看盘
            </CardHead>
            <Vote>
              <VoteSide $tone="#dc4a20">
                <VoteKnob>
                  <svg width="26" height="22" viewBox="0 0 26 22"><path d="M13 3L23 19H3Z" fill="#e04312" stroke="#e04312" strokeWidth="5" strokeLinejoin="round" /></svg>
                </VoteKnob>
                <VoteText><span>看涨</span><span>**%</span></VoteText>
              </VoteSide>
              <VoteSide $tone="#3fae62" $flip>
                <VoteKnob>
                  <svg width="26" height="22" viewBox="0 0 26 22"><path d="M13 19L23 3H3Z" fill="#3bb062" stroke="#3bb062" strokeWidth="5" strokeLinejoin="round" /></svg>
                </VoteKnob>
                <VoteText><span>看跌</span><span>**%</span></VoteText>
              </VoteSide>
            </Vote>
          </Card>
        </Cards>
      </Main>

      <BottomBar>
        <IndexButton>
          <Triangle w={24} h={8} fill="#7a7a7a" up />
          <IndexPrice>4151.19</IndexPrice>
          <IndexRow><b>上证</b><span>0.36%</span></IndexRow>
        </IndexButton>
        <BottomItem>
          <svg width="72" height="66" viewBox="0 0 72 66">
            <path d="M19 8A29 29 0 0 1 63 43M2 21L9 17M53 56A29 29 0 0 1 9 17V26M63 43L70 42M63 43V50" {...stroke} strokeWidth="3" />
            <path d="M26 18L36 31L46 18M26 31H46M26 41H46M36 31V50" {...stroke} strokeWidth="4" strokeLinecap="butt" />
          </svg>
          交易
        </BottomItem>
        <BottomItem>
          <svg width="66" height="66" viewBox="0 0 66 66">
            <path d="M42 4H11Q4 4 4 11V54Q4 61 11 61H54Q61 61 61 54V21" {...stroke} strokeWidth="3" strokeLinecap="butt" />
            <path d="M23 42L27 33L51 9L57 14L32 38ZM53 7L57 3L62 8L59 12Z" fill="currentColor" />
          </svg>
          发帖
        </BottomItem>
        <BottomItem>
          <svg width="60" height="66" viewBox="0 0 60 66">
            <g {...stroke} strokeWidth="3">
              <rect x="4" y="7" width="23" height="25" rx="4" />
              <rect x="4" y="37" width="23" height="24" rx="4" />
              <rect x="33" y="37" width="23" height="24" rx="4" />
              <path d="M43 7Q45 5 47 7L57 18Q59 20 57 22L47 32Q45 34 43 32L33 22Q31 20 33 18Z" />
            </g>
          </svg>
          功能
        </BottomItem>
        <BottomItem>
          <svg width="66" height="66" viewBox="0 0 66 66">
            <circle cx="33" cy="33" r="29" {...stroke} strokeWidth="3" />
            {[20, 33, 46].map((x) => (
              <circle key={x} cx={x} cy="33" r="3" fill="currentColor" />
            ))}
          </svg>
          设自选
        </BottomItem>
      </BottomBar>

      <SystemBar>
        <IconButton aria-label="菜单">
          <svg width="66" height="52" viewBox="0 0 66 52"><path d="M13 6H51M13 25H51M13 44H51" {...stroke} strokeWidth="6" /></svg>
        </IconButton>
        <IconButton aria-label="主页">
          <svg width="66" height="52" viewBox="0 0 66 52"><rect x="11" y="4" width="43" height="43" rx="9" {...stroke} strokeWidth="5" /></svg>
        </IconButton>
        <IconButton aria-label="后退">
          <svg width="66" height="52" viewBox="0 0 66 52"><path d="M46 4L23 23Q21 25 23 27L46 47" {...stroke} strokeWidth="5" /></svg>
        </IconButton>
      </SystemBar>
    </Shell>
  );
}
